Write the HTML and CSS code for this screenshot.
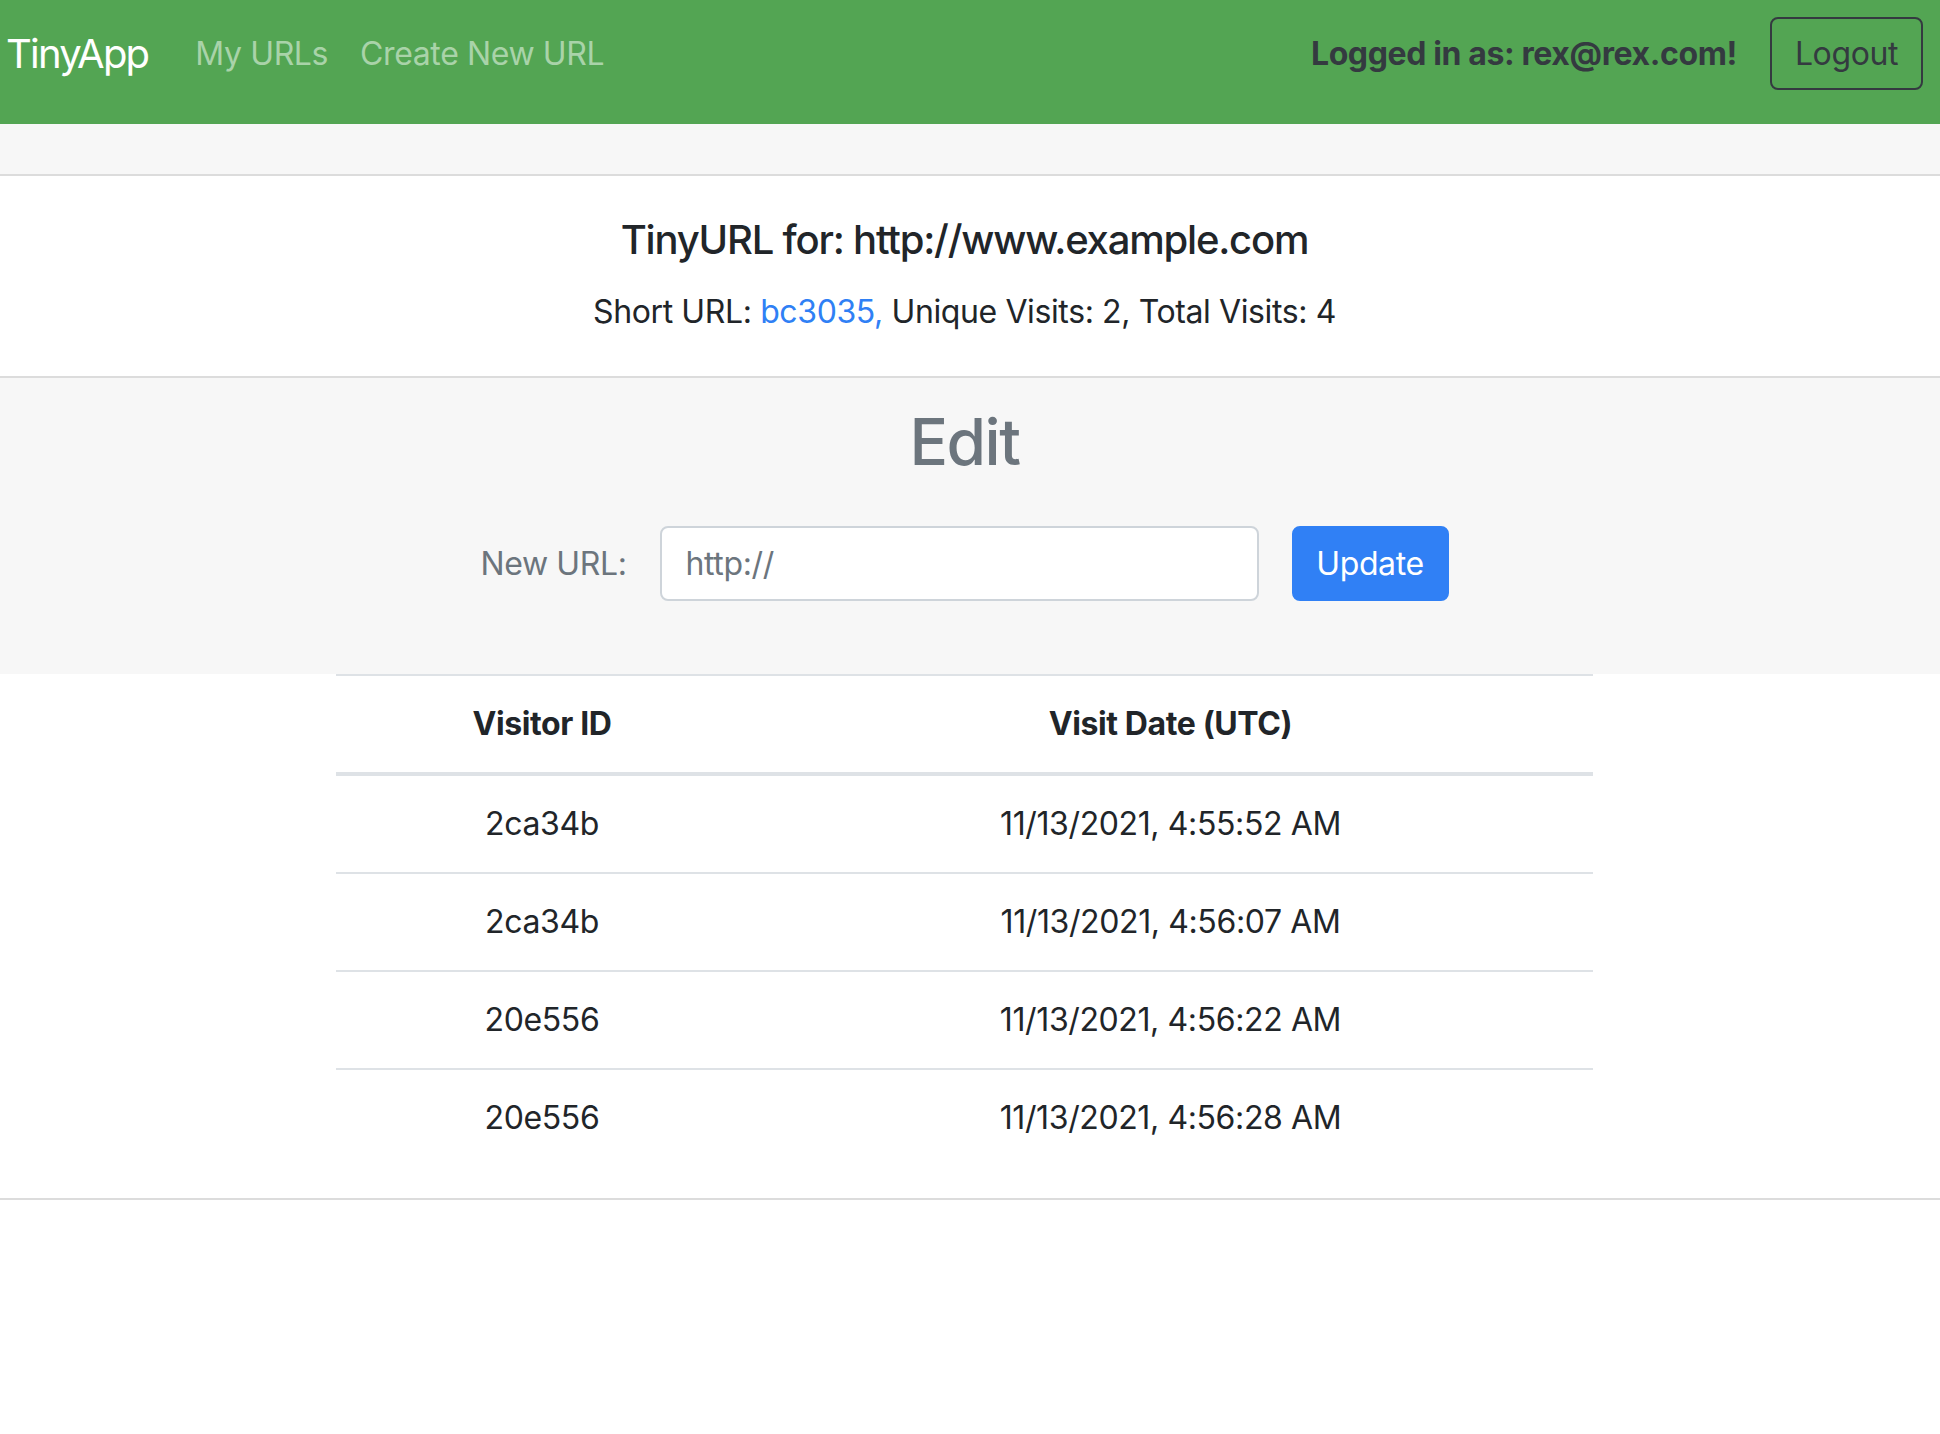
FILE: index.html
```html
<!DOCTYPE html>
<html lang="en">
<head>
<meta charset="utf-8">
<title>TinyApp</title>
<link rel="stylesheet" href="styles.css">
</head>
<body>
<nav class="navbar">
  <a class="brand" href="#">TinyApp</a>
  <div class="nav-links">
    <a class="nav-link" href="#">My URLs</a>
    <a class="nav-link" href="#">Create New URL</a>
  </div>
  <div class="nav-right">
    <span class="user">Logged in as: rex@rex.com!</span>
    <button class="btn-logout" type="button">Logout</button>
  </div>
</nav>
<div class="band"></div>
<section class="info">
  <h4 class="info-title">TinyURL for: http://www.example.com</h4>
  <p class="info-text">Short URL: <a class="link" href="#">bc3035,</a> Unique Visits: 2, Total Visits: 4</p>
</section>
<section class="edit">
  <h2 class="edit-title">Edit</h2>
  <form class="edit-form">
    <label class="edit-label" for="newurl">New URL:</label>
    <input class="edit-input" id="newurl" type="text" placeholder="http://">
    <button class="btn-update" type="button">Update</button>
  </form>
</section>
<section class="visits">
  <table class="visit-table">
    <thead>
      <tr><th class="col-id">Visitor ID</th><th class="col-date">Visit Date (UTC)</th></tr>
    </thead>
    <tbody>
      <tr><td>2ca34b</td><td>11/13/2021, 4:55:52 AM</td></tr>
      <tr><td>2ca34b</td><td>11/13/2021, 4:56:07 AM</td></tr>
      <tr><td>20e556</td><td>11/13/2021, 4:56:22 AM</td></tr>
      <tr><td>20e556</td><td>11/13/2021, 4:56:28 AM</td></tr>
    </tbody>
  </table>
</section>
</body>
</html>
```

FILE: styles.css
```css
* { box-sizing: border-box; }
html, body { margin: 0; padding: 0; }
body {
  font-family: Inter, "Noto Sans", "Liberation Sans", sans-serif;
  font-size: 32px;
  line-height: 48px;
  letter-spacing: -0.012em;
  color: #212529;
  background: #ffffff;
}
a { text-decoration: none; }

.navbar {
  display: flex;
  align-items: center;
  height: 124px;
  padding: 17px 17px 34px 6px;
  background: #53a553;
}
.brand {
  font-size: 40px;
  line-height: 60px;
  letter-spacing: -0.045em;
  color: #ffffff;
  margin-right: 31px;
}
.nav-links { display: flex; }
.nav-link {
  color: #a9d3a9;
  padding: 0 16px;
}
.nav-right {
  margin-left: auto;
  display: flex;
  align-items: center;
  gap: 33px;
}
.user {
  font-weight: 700;
  color: #343a40;
}
.btn-logout {
  font: inherit;
  letter-spacing: inherit;
  color: #343a40;
  background: transparent;
  border: 2px solid #343a40;
  border-radius: 8px;
  height: 73px;
  width: 153px;
  padding: 0;
}

.band {
  height: 52px;
  background: #f7f7f7;
  border-bottom: 2px solid #dcdcdc;
}

.info {
  padding: 40px 11px 40px 0;
  text-align: center;
  border-bottom: 2px solid #dcdcdc;
}
.info-title {
  margin: 0 0 24px;
  font-size: 40px;
  line-height: 48px;
  letter-spacing: -0.03em;
  font-weight: 500;
}
.info-text { margin: 0; }
.link { color: #2f80f5; }

.edit {
  background: #f7f7f7;
  padding: 25px 11px 73px 0;
  text-align: center;
}
.edit-title {
  margin: 0 0 46px;
  font-size: 64px;
  line-height: 77px;
  letter-spacing: -0.023em;
  font-weight: 500;
  color: #6c757d;
}
.edit-form {
  display: flex;
  justify-content: center;
  align-items: center;
  gap: 33px;
  height: 75px;
}
.edit-label { color: #6c757d; }
.edit-input {
  width: 599px;
  height: 75px;
  font: inherit;
  letter-spacing: inherit;
  color: #495057;
  padding: 0 24px;
  border: 2px solid #ced4da;
  border-radius: 8px;
  background: #ffffff;
}
.edit-input::placeholder { color: #6c757d; opacity: 1; }
.btn-update {
  width: 157px;
  height: 75px;
  font: inherit;
  letter-spacing: inherit;
  color: #ffffff;
  background: #3080f5;
  border: 2px solid #3080f5;
  border-radius: 8px;
  padding: 0;
}

.visits {
  padding: 0 11px 32px 0;
  border-bottom: 2px solid #dcdcdc;
}
.visit-table {
  margin: 0 auto;
  width: 1257px;
  border-collapse: collapse;
  border-top: 2px solid #dee2e6;
}
.visit-table th, .visit-table td {
  padding: 24px;
  text-align: center;
}
.visit-table th {
  font-weight: 700;
  border-bottom: 4px solid #dee2e6;
}
.visit-table td { border-top: 2px solid #dee2e6; }
.visit-table tbody tr:first-child td { border-top: 0; }
.col-id { width: 412px; }
.col-date { width: 845px; }
```
